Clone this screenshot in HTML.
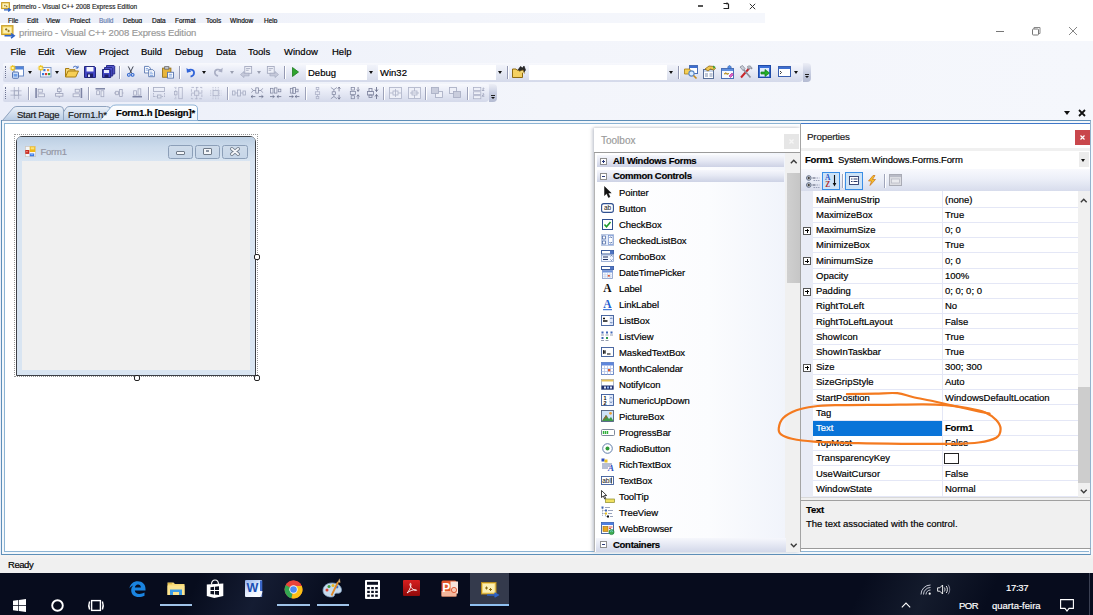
<!DOCTYPE html>
<html lang="en">
<head>
<meta charset="utf-8">
<title>primeiro - Visual C++ 2008 Express Edition</title>
<style>
html,body{margin:0;padding:0;}
body{width:1093px;height:615px;overflow:hidden;position:relative;background:#fff;font-family:"Liberation Sans",sans-serif;font-size:9.5px;color:#000;-webkit-text-stroke:0.18px currentColor;}
.abs{position:absolute;}
svg{position:absolute;overflow:visible;}
.t{position:absolute;white-space:nowrap;line-height:12px;}
#ghostmenu{left:0;top:13px;width:765px;height:10px;background:linear-gradient(90deg,#eceff9,#f3f5fb 60%,#f5f7fc);}
.gm{position:absolute;top:16.5px;font-size:6.5px;line-height:8px;color:#111;white-space:nowrap;}
#chrome{left:0;top:41px;width:1093px;height:514px;background:linear-gradient(90deg,#ebeef9 0%,#eff2fa 25%,#f3f5fb 50%,#f5f7fc 100%);}
.menu{position:absolute;top:46px;font-size:9.5px;line-height:12px;white-space:nowrap;color:#000;}
.tb{position:absolute;border-radius:2px 4px 4px 2px;background:linear-gradient(#f8f9fd 0%,#e9ecf7 40%,#d4d9ea 100%);}
.tbo{position:absolute;border-radius:0 4px 4px 0;background:linear-gradient(#eceef6 0%,#c9cfe2 50%,#b4bbd2 100%);}
.sep{position:absolute;width:1px;background:#9499b2;box-shadow:1px 0 0 #fff;}
.grip{position:absolute;width:1px;border-left:1px dotted #6d7391;}
.combo{position:absolute;background:#fff;height:15px;font-size:9.5px;line-height:15px;text-indent:2px;}
.cbtn{position:absolute;height:15px;width:9px;background:linear-gradient(#f1f3fa,#d9deec);}
.arr{position:absolute;width:0;height:0;border-left:2.5px solid transparent;border-right:2.5px solid transparent;border-top:3px solid #111;}
.arrg{position:absolute;width:0;height:0;border-left:2.5px solid transparent;border-right:2.5px solid transparent;border-top:3px solid #9a9fb0;}
.tab{position:absolute;font-size:9.5px;line-height:12px;white-space:nowrap;}
.tbx{position:absolute;left:619px;font-size:9.5px;line-height:12px;white-space:nowrap;color:#000;letter-spacing:-0.08px;}
.tbh{position:absolute;left:597px;width:187px;height:13px;background:linear-gradient(#f6f7fc 0%,#e6e9f4 45%,#cdd2e5 100%);}
.tbh b{position:absolute;left:16px;top:0;font-size:9.5px;line-height:13px;letter-spacing:-0.28px;}
.pm{position:absolute;width:7px;height:7px;border:1px solid #8e8e8e;background:#fff;box-sizing:border-box;}
.pr{position:absolute;left:813px;width:265px;height:1px;background:#e4e7f6;}
.pn{position:absolute;left:816px;font-size:9.5px;line-height:12px;white-space:nowrap;}
.pv{position:absolute;left:945px;font-size:9.5px;line-height:12px;white-space:nowrap;}
.px{position:absolute;left:803px;width:8px;height:8px;border:1px solid #555;background:#fff;box-sizing:border-box;}
.px:before{content:"";position:absolute;left:1px;top:2.5px;width:4px;height:1px;background:#000;}
.px:after{content:"";position:absolute;left:2.5px;top:1px;width:1px;height:4px;background:#000;}
.tk{position:absolute;color:#fff;font-size:9.5px;line-height:12px;white-space:nowrap;}
.ul{position:absolute;height:1.5px;background:#9fc3e8;top:604px;}
</style>
</head>
<body>
<div class="abs" id="ghostmenu"></div>
<div class="abs" id="chrome"></div>

<!-- ghost mini title bar -->
<svg class="abs" style="left:1px;top:1.500px" width="10" height="10" viewBox="0 0 10 10"><rect x="0.600" y="0.600" width="7.800" height="6" fill="#f6dc7a" stroke="#c69a22" stroke-width="1"/><rect x="1.800" y="1.800" width="5.400" height="3.600" fill="#fdf3c0"/><path d="M3 3.600h1.600M3.800 2.800v1.600M4.800 4.400h1.600M5.600 3.600v1.600" stroke="#8a6a10" stroke-width="0.600"/><path d="M3 7.800h6M7.200 6.200l2.200 1.600-2.200 1.600" stroke="#2b5fc0" stroke-width="1.200" fill="none"/></svg>
<div class="t" id="gtitle" style="left:13px;top:3px;font-size:6.5px;line-height:8px;color:#2a2a2a;">primeiro - Visual C++ 2008 Express Edition</div>
<div class="abs" style="left:698px;top:5px;width:5px;height:1.5px;background:#555"></div>
<svg class="abs" style="left:722px;top:2px" width="9" height="8" viewBox="0 0 9 8"><path d="M1.5 1.5h5M5 0.5v2M6.5 2v4.5h-5" stroke="#222" stroke-width="1.2" fill="none"/></svg>
<svg class="abs" style="left:749px;top:3px" width="7" height="7" viewBox="0 0 7 7"><path d="M0.8 0.8l5.4 5.4M6.2 0.8l-5.4 5.4" stroke="#333" stroke-width="1" fill="none"/></svg>
<div class="gm" style="left:8px">File</div>
<div class="gm" style="left:27px">Edit</div>
<div class="gm" style="left:46px">View</div>
<div class="gm" style="left:70px">Project</div>
<div class="gm" style="left:99px;color:#6a7fb0">Build</div>
<div class="gm" style="left:123px">Debug</div>
<div class="gm" style="left:152px">Data</div>
<div class="gm" style="left:175px">Format</div>
<div class="gm" style="left:206px">Tools</div>
<div class="gm" style="left:230px">Window</div>
<div class="gm" style="left:264px">Help</div>

<!-- main title bar -->
<div class="abs" style="left:0;top:23px;width:1093px;height:18px;background:#fff"></div>
<svg class="abs" style="left:1px;top:25px" width="14" height="14" viewBox="0 0 14 14"><rect x="0.700" y="0.700" width="11.200" height="8.800" fill="#f5d864" stroke="#c9a02a" stroke-width="1.200"/><rect x="2.300" y="2.300" width="8" height="5.600" fill="#fdf2b8"/><path d="M4 4.400h2.400M5.200 3.200v2.400M6.400 6h2.400M7.600 4.800v2.400" stroke="#8a6a10" stroke-width="0.900"/><path d="M3.500 10.800h9M10 8.500l3.200 2.300-3.200 2.300" stroke="#2f63c6" stroke-width="1.500" fill="none"/></svg>
<div class="t" id="mtitle" style="left:19px;top:27px;font-size:9.5px;letter-spacing:-0.1px;line-height:12px;color:#999;">primeiro - Visual C++ 2008 Express Edition</div>
<div class="abs" style="left:996px;top:31px;width:8px;height:1px;background:#777"></div>
<svg class="abs" style="left:1031px;top:26px" width="10" height="10" viewBox="0 0 10 10"><path d="M3 3V1.5h6v6H7.5" stroke="#888" stroke-width="1" fill="none"/><rect x="1.5" y="3" width="6" height="6" rx="0.8" fill="#fff" stroke="#777" stroke-width="1"/></svg>
<svg class="abs" style="left:1068px;top:26px" width="10" height="10" viewBox="0 0 10 10"><path d="M1 1l8 8M9 1l-8 8" stroke="#777" stroke-width="0.9" fill="none"/></svg>

<!-- menu bar -->
<div class="menu" style="left:10.5px">File</div>
<div class="menu" style="left:38px">Edit</div>
<div class="menu" style="left:66px">View</div>
<div class="menu" style="left:99px">Project</div>
<div class="menu" style="left:141px">Build</div>
<div class="menu" style="left:175px">Debug</div>
<div class="menu" style="left:216px">Data</div>
<div class="menu" style="left:248px">Tools</div>
<div class="menu" style="left:284px">Window</div>
<div class="menu" style="left:332px">Help</div>

<!-- ===== toolbar 1 ===== -->
<div class="tb" style="left:3px;top:62.5px;width:800px;height:19px"></div>
<div class="tbo" style="left:803px;top:62.5px;width:8px;height:19px"></div>
<div class="grip" style="left:5px;top:66px;height:12px"></div>
<!-- new project -->
<svg style="left:10px;top:65px" width="14" height="14" viewBox="0 0 14 14"><rect x="4" y="1.500" width="9.500" height="9.500" fill="#fdfdff" stroke="#5a7fc0" stroke-width="0.900"/><rect x="4.400" y="1.900" width="8.700" height="2.600" fill="#4f84dc"/><rect x="2.500" y="7" width="6" height="6.300" rx="0.800" fill="#c9dcf8" stroke="#4a6aa8" stroke-width="0.900"/><rect x="3.700" y="9" width="3.600" height="2.600" fill="#6f9fe8"/><path d="M2.800 0v6M-0.200 3h6M0.700 0.900l4.200 4.200M4.900 0.900L0.700 5.100" stroke="#f0c41c" stroke-width="1.200"/><rect x="1.800" y="2" width="2" height="2" fill="#fff3a8"/></svg>
<div class="arr" style="left:28px;top:71px"></div>
<!-- add item -->
<svg style="left:38px;top:65px" width="14" height="13" viewBox="0 0 14 13"><rect x="2.500" y="2.500" width="10.500" height="9.500" fill="#f4f7ff" stroke="#7a94c4" stroke-width="0.900"/><rect x="5.300" y="4" width="2.200" height="2.200" fill="#3b78d8"/><rect x="9" y="4" width="2.200" height="2.200" fill="#f09a2a"/><rect x="4" y="8" width="2.200" height="2.200" fill="#3b78d8"/><rect x="7" y="8" width="2.200" height="2.200" fill="#d8402f"/><rect x="10" y="8" width="2.200" height="2.200" fill="#35a03a"/><path d="M2.800 0v6M-0.200 3h6M0.700 0.900l4.200 4.200M4.900 0.900L0.700 5.100" stroke="#f0c41c" stroke-width="1.200"/><rect x="1.800" y="2" width="2" height="2" fill="#fff3a8"/></svg>
<div class="arr" style="left:55px;top:71px"></div>
<!-- open -->
<svg style="left:65px;top:65px" width="14" height="13" viewBox="0 0 14 13"><path d="M0.5 12V3.5h3.5l1 1.2h5V6" fill="#f4d677" stroke="#a87d12"/><path d="M0.5 12l2.5-6h10.5l-2.8 6z" fill="#f7cf55" stroke="#a87d12"/><path d="M8 2.5c1.5-1.8 3.6-1.6 4.6 0.2M13 0.8v2.2h-2.2" fill="none" stroke="#3a66c0" stroke-width="1"/></svg>
<!-- save -->
<svg style="left:84px;top:66px" width="12" height="12" viewBox="0 0 12 12"><path d="M0.5 0.5h10l1 1v10h-11z" fill="#4145c4" stroke="#23267e"/><rect x="2.5" y="1" width="7" height="4.5" fill="#f3f5ff"/><rect x="3" y="7.5" width="6" height="4" fill="#1d1f66"/><rect x="4" y="8.5" width="2" height="2.5" fill="#d8dcf5"/></svg>
<!-- save all -->
<svg style="left:102px;top:65px" width="13" height="13" viewBox="0 0 13 13"><path d="M4.5 0.5h7.5l0.7 0.7v7.8h-8.2z" fill="#5458cc" stroke="#2a2d8a"/><path d="M2.5 2.5h7.5l0.7 0.7v7.8h-8.2z" fill="#4a4ec8" stroke="#2a2d8a"/><path d="M0.5 4.5h7.5l0.7 0.7v7.3h-8.2z" fill="#4145c4" stroke="#23267e"/><rect x="2" y="5" width="5" height="3" fill="#e8ebff"/><rect x="2.5" y="9.5" width="4" height="3" fill="#1d1f66"/></svg>
<div class="sep" style="left:119px;top:66px;height:13px"></div>
<!-- cut -->
<svg style="left:127px;top:66px" width="7.500" height="11.500" viewBox="0 0 9 14"><path d="M1.5 0.5l4.2 8.5M7.5 0.5L3.3 9" stroke="#3d4350" stroke-width="1.2" fill="none"/><circle cx="2.2" cy="10.8" r="1.7" fill="none" stroke="#2f66cf" stroke-width="1.3"/><circle cx="6.8" cy="10.8" r="1.7" fill="none" stroke="#2f66cf" stroke-width="1.3"/></svg>
<!-- copy -->
<svg style="left:143.500px;top:66px" width="11" height="11.500" viewBox="0 0 13 14"><path d="M0.5 0.5h5l2 2v6h-7z" fill="#fff" stroke="#4a6aa8"/><path d="M2 3h3M2 5h4" stroke="#6f97dc"/><path d="M5.5 4.5h5l2 2v6.5h-7z" fill="#fff" stroke="#4a6aa8"/><path d="M7 7.5h3M7 9.5h4M7 11.5h4" stroke="#6f97dc"/></svg>
<!-- paste -->
<svg style="left:162px;top:65.500px" width="12" height="12.500" viewBox="0 0 14 15"><rect x="0.5" y="2.5" width="10" height="11" fill="#e8b53a" stroke="#8f6a12"/><rect x="3" y="0.8" width="5" height="3" fill="#c9ccd6" stroke="#666"/><rect x="6.5" y="7.5" width="7" height="7" fill="#fff" stroke="#4a6aa8"/><path d="M8 10h4M8 12h4" stroke="#6f97dc"/></svg>
<div class="sep" style="left:179px;top:66px;height:13px"></div>
<!-- undo -->
<svg style="left:186px;top:66.500px" width="10" height="10.500" viewBox="0 0 11 12"><path d="M2 4.2c3-2 7-1.2 7 2.5 0 2.3-1.6 3.8-4 4.3" fill="none" stroke="#2f63d8" stroke-width="2"/><path d="M0.3 1l0.6 5.6 5-1.6z" fill="#2f63d8"/></svg>
<div class="arr" style="left:202px;top:71px"></div>
<!-- redo (disabled) -->
<svg style="left:213px;top:67px" width="10" height="10" viewBox="0 0 11 11"><path d="M9 3.8c-3-2-7-1.2-7 2.3 0 2 1.4 3.3 3.6 3.8" fill="none" stroke="#a9aec4" stroke-width="1.8"/><path d="M10.7 0.8l-0.6 5.2-4.6-1.4z" fill="#a9aec4"/></svg>
<div class="arrg" style="left:230px;top:71px"></div>
<!-- navigate back (disabled) -->
<svg style="left:239.500px;top:66px" width="13" height="12" viewBox="0 0 15 14"><rect x="5.5" y="0.5" width="8" height="8" fill="#eef0f8" stroke="#a3a8be"/><path d="M7 3h5M7 5h3" stroke="#a3a8be"/><path d="M0.5 10l4-3.5v2h6v3h-6v2z" fill="#c5c9da" stroke="#a3a8be" stroke-width="0.8"/></svg>
<div class="arrg" style="left:257px;top:71px"></div>
<!-- navigate fwd (disabled) -->
<svg style="left:266px;top:66px" width="13" height="12" viewBox="0 0 15 14"><rect x="1.5" y="0.5" width="8" height="8" fill="#eef0f8" stroke="#a3a8be"/><path d="M3 3h5M3 5h3" stroke="#a3a8be"/><path d="M14.5 10l-4-3.5v2h-6v3h6v2z" fill="#c5c9da" stroke="#a3a8be" stroke-width="0.8"/></svg>
<div class="sep" style="left:284px;top:66px;height:13px"></div>
<!-- play -->
<svg style="left:292px;top:67px" width="7" height="10" viewBox="0 0 7 10"><path d="M0.5 0.5l6 4.5-6 4.5z" fill="#2fa52f" stroke="#1c7a1c" stroke-width="0.8"/></svg>
<div class="combo" style="left:306px;top:64.5px;width:61px">Debug</div>
<div class="cbtn" style="left:367px;top:64.5px"></div><div class="arr" style="left:369px;top:71px"></div>
<div class="combo" style="left:378px;top:64.5px;width:118px">Win32</div>
<div class="cbtn" style="left:496px;top:64.5px"></div><div class="arr" style="left:498px;top:71px"></div>
<div class="sep" style="left:507px;top:66px;height:13px"></div>
<!-- find in files -->
<svg style="left:512px;top:65px" width="14" height="14" viewBox="0 0 14 14"><path d="M0.5 12.5V4h3.5l1 1.2h5.5v7.3z" fill="#f4d061" stroke="#8f6a12"/><path d="M6 5l2.5-3.5 2 1.5 1.5-2 1.5 4-2 3" fill="#2a2a2a" stroke="#111" stroke-width="0.6"/><path d="M7 6.5l4-1.5 1.5 3.5" fill="#f7e08a" stroke="#8f6a12" stroke-width="0.7"/></svg>
<div class="combo" style="left:529px;top:64.5px;width:138px"></div>
<div class="cbtn" style="left:667px;top:64.5px"></div><div class="arr" style="left:669px;top:71px"></div>
<div class="sep" style="left:678px;top:66px;height:13px"></div>
<!-- solution explorer / search -->
<svg style="left:684px;top:65px" width="14" height="14" viewBox="0 0 14 14"><rect x="5.5" y="0.5" width="8" height="8" fill="#fff" stroke="#4a6fb5"/><rect x="6" y="1" width="7" height="2" fill="#3f6fd0"/><path d="M0.5 4h5l2 2.5-2 2.5h-5z" fill="#f4cf58" stroke="#a87d12" stroke-width="0.8"/><circle cx="7.5" cy="8.5" r="2.6" fill="#d9ecff" stroke="#5b87c7" stroke-width="1.1"/><path d="M9.5 10.5l3 3" stroke="#c58a1a" stroke-width="1.6"/></svg>
<!-- properties window -->
<svg style="left:702px;top:65px" width="14" height="14" viewBox="0 0 14 14"><rect x="1.500" y="4.500" width="10" height="9" fill="#fff" stroke="#5a6f98"/><rect x="2" y="5" width="9" height="2" fill="#c9d6ee"/><path d="M3 9h3M3 11h3M7.5 9h3M7.500 11h3" stroke="#7f8fb0"/><path d="M3 4l4-3 5 0.5 1.500 2-2 1.500-3-1-2.500 2z" fill="#f0c750" stroke="#8f6a12" stroke-width="0.8"/><path d="M11 0.500l2.500 1.500-2 2z" fill="#2f9b3a"/></svg>
<!-- object browser -->
<svg style="left:721px;top:65px" width="14" height="14" viewBox="0 0 14 14"><rect x="0.5" y="3.5" width="12" height="10" fill="#f7f9ff" stroke="#4a6fb5"/><rect x="1" y="4" width="11" height="2" fill="#5f8fe0"/><path d="M3 9l2-1.500 1 2 2-1z" fill="#e8b820" stroke="#a87d12" stroke-width="0.6"/><path d="M8 11l3-3 1.500 1.500-3 3z" fill="#e060c8" stroke="#9a2a8a" stroke-width="0.6"/><path d="M8.500 0.500l2 1.500-2 2-2-2z" fill="#4f8fe8" stroke="#2a55a8" stroke-width="0.6"/></svg>
<!-- toolbox (tools) -->
<svg style="left:739px;top:65px" width="14" height="14" viewBox="0 0 14 14"><path d="M2 12.500l8-9" stroke="#c8252b" stroke-width="2"/><path d="M8.500 1.500c2-1.500 4.500 0 4.500 2.500l-2-1-1.500 1.500z" fill="#b9bec9" stroke="#6a6f7c" stroke-width="0.6"/><path d="M11.500 12.500l-7-8" stroke="#8a8f9c" stroke-width="1.6"/><path d="M1 2l2.500-1.500 2.500 3-2 2z" fill="#c9cdd8" stroke="#6a6f7c" stroke-width="0.6"/></svg>
<!-- start page -->
<svg style="left:758px;top:65px" width="14" height="14" viewBox="0 0 14 14"><rect x="0.500" y="0.500" width="12" height="12" fill="#3a6fd8" stroke="#1f4aa8"/><rect x="2" y="3" width="9" height="8.500" fill="#dfeaff"/><path d="M3 7h4v-2.500l4.500 3.500-4.500 3.500v-2.500h-4z" fill="#22b02a" stroke="#0f7a16" stroke-width="0.7"/></svg>
<!-- command window -->
<svg style="left:778px;top:66px" width="13" height="12" viewBox="0 0 13 12"><rect x="0.500" y="0.500" width="12" height="10" fill="#fff" stroke="#3a5fb0"/><rect x="1" y="1" width="11" height="2" fill="#3f6fd0"/><path d="M2 5l1.500 1.500-1.500 1.500" fill="none" stroke="#222" stroke-width="0.9"/></svg>
<div class="arr" style="left:794px;top:71px"></div>
<div class="abs" style="left:805px;top:74px;width:4px;height:1px;background:#222"></div>
<div class="arr" style="left:805px;top:76px;border-left-width:2px;border-right-width:2px;border-top-width:2.5px"></div>

<!-- ===== toolbar 2 (layout, disabled) ===== -->
<div class="tb" style="left:3px;top:84px;width:486px;height:18px"></div>
<div class="tbo" style="left:489px;top:84px;width:8px;height:18px"></div>
<div class="grip" style="left:5px;top:87px;height:12px"></div>
<svg style="left:10px;top:86.500px" width="12" height="12" viewBox="0 0 13 14" fill="none" stroke="#a9aec4" stroke-width="0.9"><path d="M0 4.500h13M0 9.500h13M4.500 0v14M9.500 0v14"/><rect x="4.500" y="4.500" width="5" height="5" stroke="#9aa0b8" fill="#e4e7f2"/></svg>
<div class="sep" style="left:28px;top:87px;height:13px;background:#9da2b9"></div>
<svg style="left:34.500px;top:87.500px" width="10.500" height="10" viewBox="0 0 12 12" fill="none" stroke="#a0a5bd" stroke-width="0.95"><path d="M1 0v12" stroke-width="1.900" stroke="#7d84a4"/><rect x="3.500" y="1.500" width="5" height="3.500" fill="#e9ecf5"/><rect x="3.500" y="7" width="7.500" height="3.500" fill="#e9ecf5"/></svg>
<svg style="left:54.500px;top:87px" width="8.500" height="11" viewBox="0 0 9 12" fill="none" stroke="#a0a5bd" stroke-width="0.95"><path d="M4.500 0v12"/><rect x="2.500" y="2" width="4" height="3" fill="#e9ecf5"/><rect x="0.500" y="7" width="8" height="3" fill="#e9ecf5"/></svg>
<svg style="left:72px;top:87.500px" width="10.500" height="10" viewBox="0 0 12 12" fill="none" stroke="#a0a5bd" stroke-width="0.95"><path d="M11 0v12" stroke-width="1.900" stroke="#7d84a4"/><rect x="3.500" y="1.500" width="5" height="3.500" fill="#e9ecf5"/><rect x="1" y="7" width="7.500" height="3.500" fill="#e9ecf5"/></svg>
<div class="sep" style="left:88px;top:87px;height:13px;background:#9da2b9"></div>
<svg style="left:95px;top:87.500px" width="10.500" height="9.500" viewBox="0 0 12 12" fill="none" stroke="#a0a5bd" stroke-width="0.95"><path d="M0 1h12" stroke-width="1.900" stroke="#7d84a4"/><rect x="1.500" y="3.500" width="3.500" height="5" fill="#e9ecf5"/><rect x="7" y="3.500" width="3.500" height="7.500" fill="#e9ecf5"/></svg>
<svg style="left:113.500px;top:89px" width="9.500" height="8" viewBox="0 0 11 9" fill="none" stroke="#a0a5bd" stroke-width="0.95"><path d="M0 4.500h11"/><rect x="2" y="2.500" width="3" height="4" fill="#e9ecf5"/><rect x="6.500" y="0.500" width="3" height="8" fill="#e9ecf5"/></svg>
<svg style="left:131.500px;top:88px" width="10.500" height="9.500" viewBox="0 0 12 12" fill="none" stroke="#a0a5bd" stroke-width="0.95"><path d="M0 11h12" stroke-width="1.900" stroke="#7d84a4"/><rect x="1.500" y="3.500" width="3.500" height="5.500" fill="#e9ecf5"/><rect x="7" y="1" width="3.500" height="8" fill="#e9ecf5"/></svg>
<div class="sep" style="left:148px;top:87px;height:13px;background:#9da2b9"></div>
<svg style="left:153px;top:87px" width="13" height="12" viewBox="0 0 13 12" fill="none" stroke="#a9aec4" stroke-width="0.85"><rect x="0.500" y="0.500" width="11" height="4"/><path d="M0.500 6v5M11.500 6v5M1 9.500h10" stroke-dasharray="1.500 1"/><rect x="4.500" y="8" width="3.500" height="3" fill="#dfe3ef"/></svg>
<svg style="left:173.7px;top:86.9px" width="8.7" height="12.2" viewBox="0 0 10 14" fill="none" stroke="#a9aec4" stroke-width="0.85"><rect x="5.500" y="0.500" width="4" height="13"/><path d="M0.500 0.500h3M0.500 13.500h3M2 1v12" stroke-dasharray="1.500 1"/><rect x="0.500" y="5" width="3" height="4" fill="#dfe3ef"/></svg>
<svg style="left:190.8px;top:86.9px" width="11.3" height="12.2" viewBox="0 0 13 14" fill="none" stroke="#a9aec4" stroke-width="0.85"><rect x="0.500" y="0.500" width="12" height="13" stroke-dasharray="3 2"/><rect x="4" y="4.500" width="5" height="5" fill="#dfe3ef"/><path d="M6.500 0v4.500M6.500 9.500v4.500M0 7h4M9 7h4"/></svg>
<svg style="left:209.8px;top:86.9px" width="11.3" height="12.2" viewBox="0 0 13 14" fill="none" stroke="#a9aec4" stroke-width="0.85"><rect x="3.500" y="4" width="6" height="6" fill="#dfe3ef"/><path d="M3.500 0v3M6.500 0v3M9.500 0v3M3.500 11v3M6.500 11v3M9.500 11v3M0 4.500h2.500M0 7h2.500M0 9.500h2.500M10.500 4.500h2.500M10.500 7h2.500M10.500 9.500h2.500" stroke-dasharray="1 1"/></svg>
<div class="sep" style="left:227px;top:87px;height:13px;background:#9da2b9"></div>
<svg style="left:232px;top:89px" width="14" height="8" viewBox="0 0 14 8" fill="none" stroke="#a9aec4" stroke-width="0.85"><rect x="0.500" y="2" width="2.500" height="4"/><rect x="5.500" y="1" width="3" height="6"/><rect x="11" y="2" width="2.500" height="4"/><path d="M3 4h2.500M8.500 4h2.500"/></svg>
<svg style="left:250.9px;top:86.9px" width="12.2" height="12.2" viewBox="0 0 14 14" fill="none" stroke="#7f859f" stroke-width="0.85"><rect x="5.500" y="1" width="3" height="6"/><path d="M0.500 1.500l2 2.500-2 2.500M13.500 1.500l-2 2.500 2 2.500M2.500 4h3M8.500 4h3"/><path d="M0 11h5M2 9.500l-2 1.500 2 1.500M14 11h-5M12 9.500l2 1.500-2 1.500" stroke="#656b86"/></svg>
<svg style="left:269.8px;top:86.9px" width="11.3" height="12.2" viewBox="0 0 13 14" fill="none" stroke="#7f859f" stroke-width="0.85"><rect x="0.500" y="1.500" width="3" height="5.500"/><rect x="5" y="1" width="3" height="6"/><rect x="9.500" y="2.500" width="3" height="3"/><path d="M0 11h5M3 9.500l2 1.500-2 1.500M13 11h-5M10 9.500l-2 1.500 2 1.500" stroke="#656b86"/></svg>
<svg style="left:288.8px;top:86.9px" width="10.4" height="12.2" viewBox="0 0 12 14" fill="none" stroke="#7f859f" stroke-width="0.85"><rect x="1.500" y="1.500" width="3" height="5.500"/><rect x="4.500" y="0.500" width="3" height="7"/><rect x="7.500" y="2.500" width="3" height="3"/><path d="M0 11h5M3 9.500l2 1.500-2 1.500M12 11h-5M9 9.500l-2 1.500 2 1.500" stroke="#656b86"/></svg>
<div class="sep" style="left:305px;top:87px;height:13px;background:#9da2b9"></div>
<svg style="left:313.5px;top:86.9px" width="7.0" height="12.2" viewBox="0 0 8 14" fill="none" stroke="#a9aec4" stroke-width="0.85"><rect x="2.500" y="0.500" width="3" height="2.500"/><rect x="1.500" y="5.500" width="5" height="3"/><rect x="2.500" y="11" width="3" height="2.500"/><path d="M4 3v2.500M4 8.500v2.500"/></svg>
<svg style="left:329.8px;top:86.9px" width="10.4" height="12.2" viewBox="0 0 12 14" fill="none" stroke="#7f859f" stroke-width="0.85"><rect x="2.500" y="5.500" width="4" height="3"/><path d="M1 0.500l3.500 2.500 3.500-2.500M1 13.500l3.500-2.500 3.500 2.500M4.500 3v2.500M4.500 8.500v2.500"/><path d="M10.500 0v5M9 2l1.500-2 1.500 2M10.500 14v-5M9 12l1.500 2 1.500-2" stroke="#656b86"/></svg>
<svg style="left:348.8px;top:86.9px" width="10.4" height="12.2" viewBox="0 0 12 14" fill="none" stroke="#7f859f" stroke-width="0.85"><rect x="2.500" y="0.500" width="4" height="3"/><rect x="1.500" y="5" width="6" height="3.500"/><rect x="2.500" y="10" width="4" height="3.500"/><path d="M10.500 0v5M9 3l1.500 2 1.500-2M10.500 14v-5M9 11l1.500-2 1.500 2" stroke="#656b86"/></svg>
<svg style="left:366px;top:87px" width="12" height="12" viewBox="0 0 12 12" fill="none" stroke="#7f859f" stroke-width="0.85"><rect x="3" y="1.500" width="3" height="3"/><rect x="1.500" y="4.500" width="6" height="3.500"/><rect x="3" y="8" width="3" height="2.500"/><path d="M10.500 0v4.500M9 2.500l1.500 2 1.500-2M10.500 12v-4.500M9 9.500l1.500-2 1.500 2" stroke="#656b86"/></svg>
<div class="sep" style="left:383px;top:87px;height:13px;background:#9da2b9"></div>
<svg style="left:389px;top:87px" width="13" height="12" viewBox="0 0 13 12" fill="none" stroke="#b0b5c9" stroke-width="0.85"><rect x="0.500" y="0.500" width="12" height="11" fill="#eef0f8"/><rect x="4" y="4" width="5" height="4"/><path d="M1 6h3M9 6h3M6.500 2v8"/></svg>
<svg style="left:408px;top:87px" width="13" height="12" viewBox="0 0 13 12" fill="none" stroke="#b0b5c9" stroke-width="0.85"><rect x="0.500" y="0.500" width="12" height="11" fill="#eef0f8"/><rect x="4" y="4" width="5" height="4"/><path d="M6.500 1v3M6.500 8v3M2 6h9"/></svg>
<div class="sep" style="left:425px;top:87px;height:13px;background:#9da2b9"></div>
<svg style="left:431px;top:87px" width="13" height="12" viewBox="0 0 13 12" fill="none" stroke="#a9aec4" stroke-width="0.85"><rect x="4.500" y="4.500" width="7" height="6" fill="#eef0f8"/><rect x="0.500" y="0.500" width="7" height="6" fill="#c9cddd"/></svg>
<svg style="left:449px;top:87px" width="13" height="12" viewBox="0 0 13 12" fill="none" stroke="#a9aec4" stroke-width="0.85"><rect x="0.500" y="0.500" width="7" height="6" fill="#eef0f8"/><rect x="4.500" y="4.500" width="7" height="6" fill="#c9cddd"/></svg>
<div class="sep" style="left:467px;top:87px;height:13px;background:#9da2b9"></div>
<svg style="left:472.9px;top:86.9px" width="12.2" height="12.2" viewBox="0 0 14 14" fill="none" stroke="#a9aec4" stroke-width="0.85"><rect x="0.500" y="0.500" width="8.500" height="3.500" fill="#eef0f8"/><rect x="0.500" y="5.500" width="8.500" height="3" fill="#eef0f8"/><rect x="0.500" y="10" width="8.500" height="3.500" fill="#eef0f8"/><path d="M11 1.500c1-1 2 0 1 1l-1.500 1.500h2.500M11 8c1-1 2 0 1 1l-1.500 1.500h2.500" stroke="#8e94ad" stroke-width="0.900"/></svg>
<div class="abs" style="left:491px;top:95px;width:4px;height:1px;background:#222"></div>
<div class="arr" style="left:491px;top:97px;border-left-width:2px;border-right-width:2px;border-top-width:2.500px"></div>


<!-- ===== document well ===== -->
<div class="abs" style="left:1px;top:120px;width:1090px;height:435px;box-sizing:border-box;border:1px solid #5e8fb8;border-right-color:#94b2cc;background:#f3f7fb"></div>
<div class="abs" style="left:4px;top:123px;width:1085px;height:429px;box-sizing:border-box;border:1px solid #8db4d4;border-right:none;background:#fff"></div>
<div class="abs" style="left:101px;top:120px;width:96px;height:3px;background:#f3f8fd"></div>
<!-- selection dotted frame -->
<div class="abs" style="left:14px;top:134px;width:244px;height:243px;box-sizing:border-box;border:1px dotted #9a9a9a"></div>
<!-- form window -->
<div class="abs" style="left:16px;top:136px;width:240px;height:240px;box-sizing:border-box;border:1.300px solid #3c3f45;border-radius:6px 6px 0 0;background:#d9e5f2"></div>
<div class="abs" style="left:17px;top:137px;width:238px;height:24px;border-radius:4px 4px 0 0;background:linear-gradient(#bccfe3 0%,#cbdaeb 40%,#d9e5f2 100%)"></div>
<div class="abs" style="left:22px;top:161px;width:228px;height:209px;background:#f0f0f0"></div>
<!-- form icon -->
<svg style="left:25px;top:146px" width="11" height="11" viewBox="0 0 11 11"><rect x="0.400" y="0.400" width="10.200" height="10.200" fill="#f4f6fa" stroke="#cfc8c0" stroke-width="0.800"/><rect x="4.700" y="0.400" width="5.600" height="5.600" fill="#f0b818"/><rect x="5.700" y="1.200" width="3.600" height="2.200" fill="#fbe27a"/><rect x="0.300" y="4" width="4" height="3.900" fill="#c8281e"/><rect x="1.300" y="5" width="1.300" height="1.300" fill="#f0a0a0"/><rect x="4.700" y="7.500" width="4.500" height="2.800" fill="#2f6fe0"/><rect x="5.500" y="8.300" width="2.800" height="0.900" fill="#9fc0f8"/></svg>
<div class="t" id="formcap" style="left:40.5px;top:146px;color:#9496a4;font-size:9.500px;letter-spacing:-0.250px">Form1</div>
<!-- caption buttons -->
<div class="abs" style="left:168px;top:144.5px;width:25px;height:14.5px;box-sizing:border-box;border:1px solid #8c9fb8;border-radius:2.5px;background:linear-gradient(#cfdcea,#c6d6e8)"></div>
<div class="abs" style="left:195px;top:144.5px;width:25px;height:14.5px;box-sizing:border-box;border:1px solid #8c9fb8;border-radius:2.5px;background:linear-gradient(#cfdcea,#c6d6e8)"></div>
<div class="abs" style="left:222px;top:144.5px;width:26px;height:14.5px;box-sizing:border-box;border:1px solid #8c9fb8;border-radius:2.5px;background:linear-gradient(#cfdcea,#c6d6e8)"></div>
<div class="abs" style="left:176px;top:150.5px;width:9px;height:4.5px;box-sizing:border-box;border:1px solid #6f7a88;border-radius:1px;background:#f4f6f9"></div>
<div class="abs" style="left:203px;top:148px;width:9px;height:7px;box-sizing:border-box;border:1px solid #6f7a88;border-radius:1px;background:#f4f6f9"></div>
<div class="abs" style="left:206px;top:150px;width:3px;height:2px;background:#8a94a2"></div>
<svg style="left:230px;top:147px" width="10" height="9" viewBox="0 0 10 9"><path d="M1.800 1.800l6.400 5.400M8.200 1.800l-6.400 5.400" stroke="#6f7a88" stroke-width="3.600" stroke-linecap="round"/><path d="M1.800 1.800l6.400 5.400M8.200 1.800l-6.400 5.400" stroke="#f4f6f9" stroke-width="1.900" stroke-linecap="round"/></svg>
<!-- sizing handles -->
<div class="abs" style="left:254px;top:254px;width:6px;height:6px;box-sizing:border-box;border:1px solid #222;border-radius:2px;background:#fff"></div>
<div class="abs" style="left:133.5px;top:374.5px;width:6px;height:6px;box-sizing:border-box;border:1px solid #222;border-radius:2px;background:#fff"></div>
<div class="abs" style="left:254px;top:374.5px;width:6px;height:6px;box-sizing:border-box;border:1px solid #222;border-radius:2px;background:#fff"></div>

<!-- ===== document tabs ===== -->
<svg style="left:0;top:104px" width="200" height="18" viewBox="0 0 200 18">
<defs>
<linearGradient id="tg1" x1="0" y1="0" x2="0" y2="1"><stop offset="0" stop-color="#ecf1f9"/><stop offset="1" stop-color="#b7cbe3"/></linearGradient>
<linearGradient id="tg2" x1="0" y1="0" x2="0" y2="1"><stop offset="0" stop-color="#ffffff"/><stop offset="1" stop-color="#eef5fc"/></linearGradient>
</defs>
<path d="M2.500 16.500L13.500 3.500Q15 2.500 17 2.500H60Q63.500 2.500 63.500 6V16.500z" fill="url(#tg1)" stroke="#8fa3bf"/>
<path d="M63.500 16.500V8L66.500 3.500Q67.500 2.500 70 2.500H106.500Q110 2.500 110.500 5V16.500z" fill="url(#tg1)" stroke="#8fa3bf"/>
<path d="M100 16.500L111.500 2.500Q113 1 116 1H193Q197.500 1 197.500 5V16.500z" fill="url(#tg2)" stroke="#8db2d6"/>
</svg>
<div class="tab" style="left:17px;top:109px;color:#1a1a1a;letter-spacing:-0.25px" id="tab1">Start Page</div>
<div class="tab" style="left:68px;top:109px;color:#1a1a1a" id="tab2">Form1.h*</div>
<div class="tab" style="left:116px;top:107px;font-weight:bold;letter-spacing:-0.17px" id="tab3">Form1.h [Design]*</div>
<div class="arr" style="left:1063.5px;top:111px;border-left-width:3.800px;border-right-width:3.800px;border-top-width:4px"></div>
<svg style="left:1078px;top:108.500px" width="8" height="8" viewBox="0 0 8 8"><path d="M1 1l6 6M7 1l-6 6" stroke="#111" stroke-width="1.800"/></svg>

<!-- ===== Toolbox panel ===== -->
<div class="abs" style="left:594px;top:128px;width:206px;height:424px;background:#fff;box-shadow:-2px 0 3px rgba(120,130,150,0.350),0 -1px 2px rgba(120,130,150,0.200)"></div>
<div class="t" id="tbxtitle" style="left:601px;top:135px;color:#9a9a9a;font-size:10px">Toolbox</div>
<div class="abs" style="left:784px;top:134px;width:15px;height:15px;background:#e6e6e6"></div>
<svg style="left:788px;top:138px" width="7" height="7" viewBox="0 0 7 7"><path d="M1.500 1.500l4 4M5.500 1.500l-4 4" stroke="#f6f6f6" stroke-width="1.300"/></svg>
<div class="abs" style="left:594px;top:152px;width:206px;height:1px;background:#9b9b9b"></div>
<div class="abs" style="left:594px;top:153px;width:1px;height:399px;background:#b4b4b4"></div>
<div class="abs" style="left:595px;top:153px;width:190px;height:399px;background:linear-gradient(90deg,#ffffff 0%,#fbfcfe 60%,#f1f4fb 100%)"></div>
<div class="abs" style="left:799.700px;top:124px;width:1.800px;height:428px;background:#a4a4a4"></div>
<div class="abs" style="left:785px;top:153px;width:15px;height:399px;background:#f0f0f0"></div>
<div class="abs" style="left:787px;top:173px;width:12.500px;height:110px;background:linear-gradient(90deg,#d0d0d0,#c6c6c6)"></div>
<svg style="left:789.500px;top:158.500px" width="7.500" height="5" viewBox="0 0 9 6"><path d="M1 5l3.500-3.500 3.500 3.500" fill="none" stroke="#3a3a3a" stroke-width="1.700"/></svg>
<svg style="left:789.500px;top:543px" width="7.500" height="5" viewBox="0 0 9 6"><path d="M1 1l3.500 3.500 3.500-3.500" fill="none" stroke="#3a3a3a" stroke-width="1.700"/></svg>
<div class="tbh" style="top:155px;height:12px"><b id="tbh1" style="line-height:12px">All Windows Forms</b></div>
<div class="pm" style="left:600px;top:158px"></div><div class="abs" style="left:602px;top:161px;width:3px;height:1px;background:#2a3a7a"></div><div class="abs" style="left:603px;top:160px;width:1px;height:3px;background:#2a3a7a"></div>
<div class="tbh" style="top:170px;height:12px"><b id="tbh2" style="line-height:12px">Common Controls</b></div>
<div class="pm" style="left:600px;top:173px"></div><div class="abs" style="left:602px;top:176px;width:3px;height:1px;background:#2a3a7a"></div>
<svg style="left:604px;top:186px" width="8" height="12" viewBox="0 0 8 12"><path d="M0.5 0.5v9l2.200-2 1.800 4 1.500-0.700-1.800-3.800h3z" fill="#111" stroke="#111" stroke-width="0.500"/></svg>
<div class="tbx" style="top:186.5px">Pointer</div>
<svg style="left:601px;top:203px" width="13" height="10" viewBox="0 0 13 10"><rect x="0.600" y="0.600" width="11.800" height="8.800" rx="2.200" fill="#fff" stroke="#2f4f8f" stroke-width="1.100"/><text x="6.500" y="7.300" font-size="6.500" text-anchor="middle" font-family="Liberation Sans, sans-serif" fill="#111">ab</text></svg>
<div class="tbx" style="top:202.5px">Button</div>
<svg style="left:602px;top:218.5px" width="11" height="11" viewBox="0 0 11 11"><rect x="0.500" y="0.500" width="10" height="10" fill="#fff" stroke="#2f4f8f"/><path d="M2.500 5.500l2 2.200 4-4.700" fill="none" stroke="#1f9a2a" stroke-width="1.600"/></svg>
<div class="tbx" style="top:218.5px">CheckBox</div>
<svg style="left:601px;top:234px" width="13" height="12" viewBox="0 0 13 12"><rect x="0.500" y="0.500" width="12" height="11" fill="#e4ecfa" stroke="#7f97c7" stroke-dasharray="1 1"/><rect x="1.500" y="2" width="3" height="3" fill="#fff" stroke="#3a5a9a" stroke-width="0.700"/><rect x="1.500" y="7" width="3" height="3" fill="#fff" stroke="#3a5a9a" stroke-width="0.700"/><rect x="7.500" y="1.500" width="4.500" height="9" fill="#fff" stroke="#6f8fcf" stroke-width="0.700"/><path d="M8.500 4l1.200-1.300 1.200 1.300M8.500 8l1.200 1.300 1.200-1.300" fill="none" stroke="#3a5a9a" stroke-width="0.800"/></svg>
<div class="tbx" style="top:234.5px">CheckedListBox</div>
<svg style="left:601px;top:250px" width="13" height="12" viewBox="0 0 13 12"><rect x="0.500" y="0.500" width="12" height="3.500" fill="#fff" stroke="#3a5a9a"/><rect x="9" y="0.500" width="3.500" height="3.500" fill="#4f74c2"/><rect x="0.500" y="5" width="12" height="6.500" fill="#f2f6ff" stroke="#7f97c7" stroke-width="0.700"/><path d="M2 7h5M2 9.500h5" stroke="#1f2f5f" stroke-width="1.200"/><path d="M9.500 6.500l1 -1 1 1M9.500 9.500l1 1 1-1" fill="none" stroke="#3a5a9a" stroke-width="0.700"/></svg>
<div class="tbx" style="top:250.5px">ComboBox</div>
<svg style="left:601px;top:265.5px" width="13" height="13" viewBox="0 0 13 13"><rect x="0.500" y="0.500" width="12" height="3" fill="#fff" stroke="#3a5a9a"/><rect x="9" y="0.500" width="3.500" height="3" fill="#4f74c2"/><rect x="1.500" y="4.500" width="10" height="8" fill="#fff" stroke="#7f97c7" stroke-width="0.800"/><rect x="1.500" y="4.500" width="10" height="2" fill="#6f93dc"/><path d="M4 7v5.500M6.500 7v5.500M9 7v5.500M1.500 8.800h10M1.500 10.800h10" stroke="#b7c6e6" stroke-width="0.600"/><rect x="6.800" y="9" width="2" height="1.600" fill="#e0552a"/></svg>
<div class="tbx" style="top:266.5px">DateTimePicker</div>
<svg style="left:601px;top:282px" width="13" height="12" viewBox="0 0 13 12"><text x="6.300" y="10.300" font-size="11.500" font-weight="bold" text-anchor="middle" font-family="Liberation Serif, serif" fill="#111">A</text></svg>
<div class="tbx" style="top:282.5px">Label</div>
<svg style="left:601px;top:297.5px" width="13" height="13" viewBox="0 0 13 13"><text x="6.300" y="10" font-size="11.500" font-weight="bold" text-anchor="middle" font-family="Liberation Serif, serif" fill="#1f5fd0">A</text><path d="M2 11.700h9" stroke="#1f5fd0" stroke-width="1"/></svg>
<div class="tbx" style="top:298.5px">LinkLabel</div>
<svg style="left:601px;top:314.5px" width="13" height="11" viewBox="0 0 13 11"><rect x="0.500" y="0.500" width="12" height="10" fill="#fff" stroke="#3a5a9a" stroke-width="0.900"/><rect x="8.500" y="1" width="3.500" height="9" fill="#dfe8fa"/><path d="M2 3.500h2M2 6h4.500" stroke="#111" stroke-width="1.300"/><path d="M9.300 4l1-1.200 1 1.200M9.300 7l1 1.200 1-1.200" fill="none" stroke="#3a5a9a" stroke-width="0.700"/></svg>
<div class="tbx" style="top:314.5px">ListBox</div>
<svg style="left:601px;top:330.5px" width="13" height="11" viewBox="0 0 13 11"><g fill="#3f66b8"><rect x="0.500" y="0.500" width="2" height="2"/><rect x="5" y="0.500" width="2" height="2"/><rect x="9.500" y="0.500" width="2" height="2"/><rect x="0.500" y="6" width="2" height="2"/></g><g fill="#2f9a4a"><rect x="5" y="6" width="2" height="2"/></g><path d="M0 4h3M4.500 4h3M9 4h3M0 9.500h3M4.500 9.500h3" stroke="#7a8499" stroke-width="0.800"/></svg>
<div class="tbx" style="top:330.5px">ListView</div>
<svg style="left:601px;top:347px" width="13" height="10" viewBox="0 0 13 10"><rect x="0.500" y="0.500" width="12" height="9" fill="#fff" stroke="#3a5a9a" stroke-width="0.900"/><path d="M2.500 3v4M4 3v4M2 4.300h2.600M2 5.700h2.600" stroke="#111" stroke-width="0.800"/><path d="M6 7h3.500" stroke="#111" stroke-width="1.100"/></svg>
<div class="tbx" style="top:346.5px">MaskedTextBox</div>
<svg style="left:601px;top:361.5px" width="13" height="13" viewBox="0 0 13 13"><rect x="0.500" y="0.500" width="12" height="12" fill="#fff" stroke="#5f7fc2" stroke-width="0.900"/><rect x="0.500" y="0.500" width="12" height="3" fill="#5f86dc"/><path d="M3.500 4v8.500M6.500 4v8.500M9.500 4v8.500M0.500 6.500h12M0.500 9.500h12" stroke="#aebfe6" stroke-width="0.700"/><rect x="7" y="7" width="2.300" height="2.300" fill="#e0552a"/></svg>
<div class="tbx" style="top:362.5px">MonthCalendar</div>
<svg style="left:601px;top:378.5px" width="13" height="11" viewBox="0 0 13 11"><rect x="0.500" y="0.500" width="12" height="10" fill="#fff" stroke="#8f9ab5" stroke-width="0.700"/><rect x="0.500" y="0.500" width="12" height="2" fill="#e8c25a"/><rect x="0.500" y="6.500" width="12" height="4" fill="#1f2f6f"/><rect x="3" y="7.500" width="2" height="2" fill="#dfe6f7"/><rect x="6" y="7.500" width="2" height="2" fill="#8fb0ef"/><rect x="9" y="7.500" width="2" height="2" fill="#dfe6f7"/></svg>
<div class="tbx" style="top:378.5px">NotifyIcon</div>
<svg style="left:601px;top:394px" width="13" height="12" viewBox="0 0 13 12"><rect x="0.500" y="0.500" width="12" height="11" fill="#fff" stroke="#3a5a9a" stroke-width="0.900"/><rect x="8" y="1" width="4" height="10" fill="#dfe8fa"/><text x="4" y="5.500" font-size="5.500" font-weight="bold" text-anchor="middle" font-family="Liberation Sans, sans-serif" fill="#111">1</text><text x="4" y="10.800" font-size="5.500" font-weight="bold" text-anchor="middle" font-family="Liberation Sans, sans-serif" fill="#111">2</text><path d="M9 4.500l1-1.300 1 1.300M9 7.500l1 1.300 1-1.300" fill="none" stroke="#3a5a9a" stroke-width="0.700"/></svg>
<div class="tbx" style="top:394.5px">NumericUpDown</div>
<svg style="left:601px;top:410px" width="13" height="12" viewBox="0 0 13 12"><rect x="0.500" y="0.500" width="12" height="11" fill="#cfe3fa" stroke="#4f5f7f" stroke-width="0.900"/><path d="M1 11l4-6 3 4 2-2 2.500 4z" fill="#3f9a4a"/><path d="M1 11l4-6 1.500 2z" fill="#8a6a3a"/><circle cx="9.500" cy="3.300" r="1.400" fill="#f0a030"/></svg>
<div class="tbx" style="top:410.5px">PictureBox</div>
<svg style="left:601px;top:428.5px" width="14" height="7" viewBox="0 0 14 7"><rect x="0.500" y="0.500" width="13" height="6" rx="1" fill="#fff" stroke="#6f7a8f" stroke-width="0.900"/><path d="M2.500 2v3M4.500 2v3M6.500 2v3" stroke="#2fb03a" stroke-width="1.400"/></svg>
<div class="tbx" style="top:426.5px">ProgressBar</div>
<svg style="left:602px;top:442.5px" width="11" height="11" viewBox="0 0 11 11"><circle cx="5.500" cy="5.500" r="4.800" fill="#fff" stroke="#4f6f9f" stroke-width="0.900"/><circle cx="5.500" cy="5.500" r="2" fill="#2f9a3a"/></svg>
<div class="tbx" style="top:442.5px">RadioButton</div>
<svg style="left:601px;top:457.5px" width="13" height="13" viewBox="0 0 13 13"><rect x="0.500" y="0.500" width="3" height="3" fill="#2f4fc0"/><rect x="3.500" y="1.500" width="3" height="3" fill="#e8c020"/><path d="M1 6h10M1 8h8M1 10h6" stroke="#5f6f9f" stroke-width="0.900"/><text x="10" y="12.800" font-size="9" font-style="italic" font-weight="bold" text-anchor="middle" font-family="Liberation Serif, serif" fill="#2f4fc0">A</text></svg>
<div class="tbx" style="top:458.5px">RichTextBox</div>
<svg style="left:601px;top:475.5px" width="13" height="9" viewBox="0 0 13 9"><rect x="0.500" y="0.500" width="12" height="8" fill="#fff" stroke="#3a5a9a" stroke-width="0.900"/><text x="5.500" y="6.800" font-size="6.500" text-anchor="middle" font-family="Liberation Sans, sans-serif" fill="#111">abl</text><path d="M10.500 1.500v6" stroke="#111" stroke-width="0.700"/></svg>
<div class="tbx" style="top:474.5px">TextBox</div>
<svg style="left:601px;top:489.5px" width="14" height="13" viewBox="0 0 14 13"><path d="M0.500 0.500v7l1.800-1.500 1.400 3 1.100-0.500-1.400-3h2.300z" fill="#fff" stroke="#111" stroke-width="0.800"/><rect x="4.500" y="9" width="9" height="3.500" fill="#f0e060" stroke="#8a8a2a" stroke-width="0.700"/></svg>
<div class="tbx" style="top:490.5px">ToolTip</div>
<svg style="left:601px;top:506px" width="13" height="12" viewBox="0 0 13 12"><path d="M1.500 2v8M1.500 4.500h3M1.500 7.500h3M4.500 7.500v3h2" stroke="#7a8499" stroke-width="0.700" stroke-dasharray="1 0.700" fill="none"/><rect x="0.500" y="0.500" width="2" height="2" fill="#3f66b8"/><rect x="4" y="3.500" width="2" height="2" fill="#3f66b8"/><rect x="4" y="6.500" width="2" height="2" fill="#e8c020"/><rect x="6" y="9.500" width="2" height="2" fill="#111"/><path d="M4 1.500h5M7 4.500h5M7 7.500h4M9 10.500h3" stroke="#8f9ab5" stroke-width="0.900"/></svg>
<div class="tbx" style="top:506.5px">TreeView</div>
<svg style="left:601px;top:521.5px" width="14" height="13" viewBox="0 0 14 13"><rect x="0.500" y="0.500" width="12" height="11" fill="#fff" stroke="#3a5a9a" stroke-width="0.900"/><rect x="0.500" y="0.500" width="12" height="2.500" fill="#4f7fe0"/><rect x="2" y="4.500" width="5" height="5" fill="#e8a820" stroke="#9a6a10" stroke-width="0.600"/><path d="M8 5h3.500M8 6.500h2" stroke="#d83a2a" stroke-width="0.900"/><circle cx="10.500" cy="10" r="2.600" fill="#3fae4f" stroke="#1f7a3f" stroke-width="0.600"/><path d="M9 9.500q1.500-1.500 3 0" stroke="#7fd0f0" stroke-width="0.800" fill="none"/></svg>
<div class="tbx" style="top:522.5px">WebBrowser</div>
<div class="tbh" style="top:538px;height:14px;left:596px;width:190px;background:linear-gradient(#f6f7fc 0%,#e6e9f4 45%,#d3d8e9 100%)"><b style="line-height:13px;left:17px">Containers</b></div>
<div class="pm" style="left:600px;top:541px"></div><div class="abs" style="left:602px;top:544px;width:3px;height:1px;background:#2a3a7a"></div>

<!-- ===== Properties panel ===== -->
<div class="abs" style="left:801px;top:123px;width:289px;height:426px;background:#fff;border-top:1px solid #3f78c9;box-sizing:border-box"></div>
<div class="t" id="ptitle" style="left:807px;top:130.5px;font-size:9.800px;color:#1e1e1e;letter-spacing:-0.200px">Properties</div>
<div class="abs" style="left:1075px;top:130px;width:15px;height:15px;background:#c9474c"></div>
<svg style="left:1079px;top:134px" width="7" height="7" viewBox="0 0 7 7"><path d="M1.500 1.500l4 4M5.500 1.500l-4 4" stroke="#fff" stroke-width="1.200"/></svg>
<div class="abs" style="left:801px;top:148px;width:289px;height:3px;background:#f0f0f0"></div>
<div class="t" id="pcombo1" style="left:805px;top:154px;font-weight:bold;letter-spacing:-0.2px">Form1</div>
<div class="t" id="pcombo2" style="left:838px;top:154px;letter-spacing:-0.1px">System.Windows.Forms.Form</div>
<div class="abs" style="left:1079px;top:152px;width:10px;height:15px;background:#ececec"></div><div class="arr" style="left:1081px;top:159px;border-left-width:2.800px;border-right-width:2.800px"></div>
<div class="abs" style="left:801px;top:169px;width:289px;height:22px;background:linear-gradient(#f8f9fd 0%,#eceff8 45%,#d7dcec 100%)"></div>
<svg style="left:805.5px;top:174.5px" width="14" height="13" viewBox="0 0 14 13"><circle cx="2.800" cy="3" r="2.300" fill="#fff" stroke="#3a4a6a" stroke-width="0.800"/><path d="M1.400 3h2.800M2.800 1.600v2.800" stroke="#111" stroke-width="0.900"/><circle cx="2.800" cy="10" r="2.300" fill="#fff" stroke="#3a4a6a" stroke-width="0.800"/><path d="M1.400 10h2.800M2.800 8.600v2.800" stroke="#111" stroke-width="0.900"/><path d="M6.500 3h3" stroke="#555b70" stroke-width="1"/><path d="M7.500 5.500h6" stroke="#9aa0b8" stroke-width="1" stroke-dasharray="1.500 0.800"/><path d="M6.500 10h3" stroke="#555b70" stroke-width="1"/><path d="M7.500 12.500h6M10.500 3h3M10.500 10h3" stroke="#9aa0b8" stroke-width="1" stroke-dasharray="1.500 0.800"/></svg>
<div class="abs" style="left:822px;top:172px;width:18px;height:18px;box-sizing:border-box;border:1px solid #3a8ee6;background:#cde3f7"></div>
<svg style="left:824px;top:174px" width="14" height="14" viewBox="0 0 14 14"><text x="3.800" y="6.200" font-size="7.500" font-weight="bold" text-anchor="middle" font-family="Liberation Serif, serif" fill="#2a55c8">A</text><text x="3.800" y="13" font-size="7.500" font-weight="bold" text-anchor="middle" font-family="Liberation Serif, serif" fill="#b03030">Z</text><path d="M10.500 1v10" stroke="#111" stroke-width="1.100"/><path d="M8.700 9l1.800 3.500 1.800-3.500z" fill="#111"/></svg>
<div class="sep" style="left:842px;top:174px;height:14px;background:#a0a5bb"></div>
<div class="abs" style="left:845px;top:172px;width:18px;height:18px;box-sizing:border-box;border:1px solid #3a8ee6;background:#cde3f7"></div>
<svg style="left:849px;top:176px" width="10" height="9" viewBox="0 0 10 9"><rect x="0.500" y="0.500" width="9" height="8" fill="#fff" stroke="#2a3a6a" stroke-width="0.900"/><path d="M2 3h1.500M4.500 3h4M2 5.500h1.500M4.500 5.500h4" stroke="#2a3a6a" stroke-width="1"/></svg>
<svg style="left:867px;top:175px" width="10" height="11" viewBox="0 0 10 11"><path d="M6 0.500L1.500 6h3L3 10.500 8.500 4.500h-3L8 0.500z" fill="#f6c02a" stroke="#c8701a" stroke-width="0.700"/></svg>
<div class="sep" style="left:884px;top:174px;height:14px;background:#a0a5bb"></div>
<svg style="left:889px;top:174px" width="13" height="13" viewBox="0 0 13 13"><rect x="0.500" y="0.500" width="12" height="11" fill="#dcdde2" stroke="#a9abb5"/><rect x="1" y="1" width="11" height="2" fill="#b9bbc6"/><rect x="2.500" y="5" width="8" height="4" fill="#e9eaee" stroke="#b4b6c0" stroke-width="0.700"/></svg>
<div class="abs" style="left:801px;top:191px;width:277px;height:306px;background:#fff"></div>
<div class="abs" style="left:801px;top:191px;width:12px;height:306px;background:#e9ecf6"></div>
<div class="abs" style="left:942px;top:191px;width:1px;height:306px;background:#e4e7f6"></div>
<div class="pr" style="top:206.6px"></div>
<div class="pn" style="top:193.8px">MainMenuStrip</div>
<div class="pv" style="top:193.8px">(none)</div>
<div class="pr" style="top:221.8px"></div>
<div class="pn" style="top:209.0px">MaximizeBox</div>
<div class="pv" style="top:209.0px">True</div>
<div class="pr" style="top:237.0px"></div>
<div class="pn" style="top:224.2px">MaximumSize</div>
<div class="pv" style="top:224.2px">0; 0</div>
<div class="px" style="top:226.9px"></div>
<div class="pr" style="top:252.2px"></div>
<div class="pn" style="top:239.4px">MinimizeBox</div>
<div class="pv" style="top:239.4px">True</div>
<div class="pr" style="top:267.5px"></div>
<div class="pn" style="top:254.6px">MinimumSize</div>
<div class="pv" style="top:254.6px">0; 0</div>
<div class="px" style="top:257.3px"></div>
<div class="pr" style="top:282.7px"></div>
<div class="pn" style="top:269.9px">Opacity</div>
<div class="pv" style="top:269.9px">100%</div>
<div class="pr" style="top:297.9px"></div>
<div class="pn" style="top:285.1px">Padding</div>
<div class="pv" style="top:285.1px">0; 0; 0; 0</div>
<div class="px" style="top:287.8px"></div>
<div class="pr" style="top:313.1px"></div>
<div class="pn" style="top:300.3px">RightToLeft</div>
<div class="pv" style="top:300.3px">No</div>
<div class="pr" style="top:328.3px"></div>
<div class="pn" style="top:315.5px">RightToLeftLayout</div>
<div class="pv" style="top:315.5px">False</div>
<div class="pr" style="top:343.5px"></div>
<div class="pn" style="top:330.7px">ShowIcon</div>
<div class="pv" style="top:330.7px">True</div>
<div class="pr" style="top:358.7px"></div>
<div class="pn" style="top:345.9px">ShowInTaskbar</div>
<div class="pv" style="top:345.9px">True</div>
<div class="pr" style="top:373.9px"></div>
<div class="pn" style="top:361.1px">Size</div>
<div class="pv" style="top:361.1px">300; 300</div>
<div class="px" style="top:363.8px"></div>
<div class="pr" style="top:389.1px"></div>
<div class="pn" style="top:376.3px">SizeGripStyle</div>
<div class="pv" style="top:376.3px">Auto</div>
<div class="pr" style="top:404.3px"></div>
<div class="pn" style="top:391.5px">StartPosition</div>
<div class="pv" style="top:391.5px">WindowsDefaultLocation</div>
<div class="pr" style="top:419.6px"></div>
<div class="pn" style="top:406.7px">Tag</div>
<div class="pr" style="top:434.8px"></div>
<div class="abs" style="left:813px;top:420.9px;width:129px;height:15px;background:#0a74d8"></div>
<div class="pn" style="top:421.9px;color:#fff">Text</div>
<div class="pv" style="top:421.9px;font-weight:bold;letter-spacing:-0.2px">Form1</div>
<div class="pr" style="top:450.0px"></div>
<div class="pn" style="top:437.2px">TopMost</div>
<div class="pv" style="top:437.2px">False</div>
<div class="pr" style="top:465.2px"></div>
<div class="pn" style="top:452.4px">TransparencyKey</div>
<div class="abs" style="left:944px;top:453.1px;width:15px;height:11px;box-sizing:border-box;border:1px solid #222;background:#fff"></div>
<div class="pr" style="top:480.4px"></div>
<div class="pn" style="top:467.6px">UseWaitCursor</div>
<div class="pv" style="top:467.6px">False</div>
<div class="pr" style="top:495.6px"></div>
<div class="pn" style="top:482.8px">WindowState</div>
<div class="pv" style="top:482.8px">Normal</div>
<div class="abs" style="left:1078px;top:191px;width:12px;height:306px;background:#f0f0f0"></div>
<div class="abs" style="left:1078px;top:387px;width:12px;height:96px;background:#cdcdcd"></div>
<svg style="left:1080px;top:197.500px" width="7.500" height="5" viewBox="0 0 9 6"><path d="M1 5l3.500-3.500 3.500 3.500" fill="none" stroke="#3a3a3a" stroke-width="1.700"/></svg>
<svg style="left:1080px;top:489px" width="7.500" height="5" viewBox="0 0 9 6"><path d="M1 1l3.500 3.500 3.500-3.500" fill="none" stroke="#3a3a3a" stroke-width="1.700"/></svg>
<div class="abs" style="left:801px;top:497px;width:289px;height:4px;background:#f0f0f0;border-top:1px solid #d9d9d9;border-bottom:1px solid #a0a0a0;box-sizing:border-box"></div>
<div class="abs" style="left:801px;top:501px;width:289px;height:48px;background:#f0f0f0"></div>
<div class="t" id="pdesc1" style="left:806px;top:504px;font-weight:bold;letter-spacing:-0.2px">Text</div>
<div class="t" id="pdesc2" style="left:806px;top:518px">The text associated with the control.</div>
<div class="abs" style="left:801px;top:548px;width:290px;height:1px;background:#9a9a9a"></div>
<svg style="left:0;top:0" width="1093" height="615" viewBox="0 0 1093 615" fill="none" stroke="#f47a1f" stroke-width="2.200" stroke-linecap="round" stroke-linejoin="round"><path d="M846.9 394.2C851.6 394.1 867.0 393.8 875.4 393.6C883.8 393.4 891.2 392.6 897.4 393.2C903.6 393.8 906.5 395.6 912.7 397.0C918.9 398.4 927.4 399.9 934.7 401.5C942.0 403.1 949.3 404.9 956.6 406.5C963.9 408.1 973.1 410.2 978.6 411.4C984.1 412.6 987.8 413.1 989.6 413.5"/><path d="M778.8 427.8C779.2 425.1 780.3 420.9 783.2 418.0C786.1 415.1 791.3 412.2 796.4 410.3C801.5 408.4 807.4 407.4 814.0 406.5C820.6 405.6 824.9 405.5 835.9 405.2C846.9 404.9 865.2 404.9 879.8 404.8C894.4 404.7 912.7 404.2 923.7 404.3C934.7 404.4 938.4 404.6 945.7 405.2C953.0 405.8 961.0 406.8 967.6 408.0C974.2 409.2 980.4 410.4 985.2 412.4C990.0 414.4 993.6 417.2 996.2 420.0C998.8 422.8 1000.6 426.1 1000.6 429.0C1000.6 431.9 999.9 435.4 996.2 437.7C992.5 439.9 985.2 441.5 978.6 442.5C972.0 443.5 969.4 443.6 956.6 443.8C943.8 444.0 918.3 443.9 901.8 443.8C885.3 443.7 872.4 443.6 857.8 443.2C843.1 442.8 824.9 442.3 813.9 441.6C802.9 440.9 797.5 440.0 792.0 438.8C786.5 437.6 783.2 436.2 781.0 434.4C778.8 432.6 778.4 430.5 778.8 427.8Z"/></svg>

<!-- ===== status bar ===== -->
<div class="abs" style="left:0;top:555px;width:1093px;height:19px;background:linear-gradient(#f6f3f2 0%,#f0f0f0 25%,#f0f0f0 100%)"></div>

<div class="t" id="ready" style="left:8px;top:559px;letter-spacing:-0.450px">Ready</div>
<!-- ===== taskbar ===== -->
<div class="abs" style="left:0;top:573px;width:1093px;height:42px;background:#070c1d"></div>
<div class="abs" style="left:0;top:573px;width:1093px;height:42px;background:linear-gradient(115deg,rgba(40,50,80,0) 0%,rgba(40,50,80,0) 18%,rgba(45,58,90,0.350) 24%,rgba(40,50,80,0) 31%,rgba(40,50,80,0) 78%,rgba(50,62,80,0.300) 84%,rgba(40,50,80,0) 90%)"></div>
<!-- start -->
<svg style="left:13px;top:599px" width="13" height="13" viewBox="0 0 13 13"><path d="M0 1.800l5.300-0.800v5.200h-5.300zM6 0.900l7-1v6.300h-7zM0 6.900h5.300v5.200l-5.300-0.800zM6 6.900h7v6.200l-7-1z" fill="#fff"/></svg>
<!-- cortana -->
<svg style="left:51px;top:598.700px" width="13" height="13" viewBox="0 0 13 13"><circle cx="6.500" cy="6.500" r="5.300" fill="none" stroke="#fff" stroke-width="1.900"/></svg>
<!-- task view -->
<svg style="left:88px;top:600px" width="16" height="11" viewBox="0 0 16 11" fill="none" stroke="#fff" stroke-width="1.400"><rect x="3.600" y="0.600" width="8.800" height="9.800"/><path d="M1.600 1.500c-1 2.500-1 5.500 0 8M14.400 1.500c1 2.500 1 5.500 0 8"/></svg>
<!-- edge -->
<svg style="left:129px;top:581px" width="17" height="16" viewBox="0 0 17 16"><path d="M0.500 7.500C1 3 4.500 0.300 8.800 0.300c4.700 0 7.700 3.200 7.700 7.700v1.500H5.800c0.200 2.300 2 3.500 4.500 3.500 1.900 0 3.700-0.500 5.200-1.400v3.200c-1.600 0.800-3.500 1.200-5.700 1.200-4.600 0-7.600-2.700-7.600-6.800 0-2 0.800-3.600 2-4.800C2.500 5 1.200 6 0.500 7.500zM5.900 6.500h6c0-1.900-1.200-3.100-2.900-3.100-1.700 0-2.900 1.300-3.100 3.100z" fill="#1a84e0"/></svg>
<!-- explorer -->
<svg style="left:167px;top:581px" width="18" height="16" viewBox="0 0 18 16"><path d="M0.500 1.500h6l1.500 1.500h9.500v11h-17z" fill="#f6d874"/><rect x="0.500" y="4.500" width="17" height="9.500" fill="#fbe38f"/><path d="M3 14V8.500h12V14h-3v-3H6v3z" fill="#3c9be6"/><rect x="1" y="2.200" width="4" height="1" fill="#d9b23c"/></svg>
<div class="ul" style="left:160px;width:32px"></div>
<!-- store -->
<svg style="left:206px;top:579px" width="18" height="20" viewBox="0 0 18 20"><path d="M5.500 5.500C5.500 2.500 7 1 9 1s3.500 1.500 3.500 4.500" fill="none" stroke="#fff" stroke-width="1.100"/><path d="M0.800 5.500l16.500-1v12.500l-9 2-7.500-2z" fill="#fff"/><path d="M4.500 8.200l3.600-0.400v3.300h-3.600zM9 7.700l4-0.500v3.900h-4zM4.500 12h3.600v3.400l-3.600-0.500zM9 12h4v4l-4-0.600z" fill="#0b1020"/></svg>
<!-- word -->
<svg style="left:245px;top:580px" width="18" height="17" viewBox="0 0 18 17"><defs><linearGradient id="wdg" x1="0" y1="0" x2="0.600" y2="1"><stop offset="0" stop-color="#8fb0ec"/><stop offset="0.550" stop-color="#dfe9fb"/><stop offset="1" stop-color="#ffffff"/></linearGradient></defs><rect x="0" y="0" width="17" height="17" rx="1" fill="url(#wdg)"/><rect x="15" y="0.500" width="2.300" height="16" fill="#3a66c8"/><path d="M12.500 10.500l5 0.800-1.300 5.200-4.200-1z" fill="#f7f9fe"/><text x="7.500" y="12" font-size="12.500" font-weight="bold" text-anchor="middle" font-family="Liberation Sans, sans-serif" fill="#1a4fb5">W</text></svg>
<!-- chrome -->
<svg style="left:284px;top:580px" width="19" height="19" viewBox="0 0 19 19"><circle cx="9.500" cy="9.500" r="9" fill="#e8443a"/><path d="M9.500 9.500L1.800 5 A9 9 0 0 0 7.500 18.300z" fill="#33a852"/><path d="M9.500 9.500L7.500 18.300A9 9 0 0 0 17.800 6L9.500 6z" fill="#fbc116"/><path d="M1.800 5A9 9 0 0 1 17.800 6H9.500z" fill="#e8443a"/><circle cx="9.500" cy="9.500" r="4.200" fill="#f4f4f4"/><circle cx="9.500" cy="9.500" r="3.300" fill="#4a8af4"/></svg>
<div class="ul" style="left:277px;width:33px"></div>
<!-- paint -->
<svg style="left:322px;top:578px" width="22" height="22" viewBox="0 0 22 22"><path d="M1 12.500C1 8 5 5 10 5c5.500 0 9.500 3 9.500 7 0 2.500-2 3.500-4 3.200-1.800-0.300-3 0.300-3 1.800 0 1.200-1.200 2-3.200 2C4.500 19 1 16.500 1 12.500z" fill="#c7dbee" stroke="#7d9cbb" stroke-width="0.800"/><circle cx="5" cy="12" r="1.500" fill="#d8432f"/><circle cx="7" cy="8.500" r="1.500" fill="#3f9a3f"/><circle cx="11" cy="7.500" r="1.500" fill="#e8b820"/><circle cx="15" cy="9" r="1.400" fill="#3a6fd0"/><path d="M9.500 17.500L16 4" stroke="#e08a2a" stroke-width="1.800"/><path d="M16 4l1.500-3.200 0.700 3.700z" fill="#f2d9a0" stroke="#b98a4a" stroke-width="0.500"/></svg>
<div class="ul" style="left:317px;width:32px"></div>
<!-- calculator -->
<svg style="left:365px;top:580px" width="15" height="19" viewBox="0 0 15 19"><rect x="0" y="0" width="15" height="19" rx="1" fill="#fff"/><rect x="2" y="1.800" width="11" height="3" fill="#0b1020"/><g fill="#0b1020"><rect x="2.200" y="7" width="2.600" height="2.200"/><rect x="6.200" y="7" width="2.600" height="2.200"/><rect x="10.200" y="7" width="2.600" height="2.200"/><rect x="2.200" y="10.800" width="2.600" height="2.200"/><rect x="6.200" y="10.800" width="2.600" height="2.200"/><rect x="10.200" y="10.800" width="2.600" height="2.200"/><rect x="2.200" y="14.600" width="2.600" height="2.200"/><rect x="6.200" y="14.600" width="2.600" height="2.200"/><rect x="10.200" y="14.600" width="2.600" height="2.200"/></g></svg>
<!-- acrobat -->
<svg style="left:403px;top:580px" width="17" height="16" viewBox="0 0 17 16"><defs><linearGradient id="acg" x1="0" y1="0" x2="0" y2="1"><stop offset="0" stop-color="#d81f1f"/><stop offset="1" stop-color="#8f0a0a"/></linearGradient></defs><rect x="0" y="0" width="17" height="16" rx="1" fill="url(#acg)"/><path d="M4 13c1.500-1.500 3.500-4.500 4-8 0.200-1.500-0.800-2.300-1-1 -0.300 2 2 5.500 5.500 6.500 1.500 0.300 1.500-0.800 0-0.800-2.500 0-6 1.200-8.500 3.300z" fill="none" stroke="#fff" stroke-width="0.900"/></svg>
<!-- powerpoint -->
<svg style="left:441px;top:580px" width="18" height="17" viewBox="0 0 18 17"><rect x="0.500" y="0.500" width="15" height="16" rx="1.500" fill="#e2582a"/><rect x="9.500" y="1.500" width="7.500" height="12" fill="#f6e3da"/><rect x="0.500" y="11" width="15" height="5.500" fill="#f3b79c"/><circle cx="13" cy="10" r="2.600" fill="#f7cdb9" stroke="#d8431a" stroke-width="0.800"/><text x="5.200" y="11.500" font-size="12" font-weight="bold" text-anchor="middle" font-family="Liberation Sans, sans-serif" fill="#fff">P</text></svg>
<!-- VC++ (active) -->
<div class="abs" style="left:470px;top:573px;width:39px;height:32px;background:#343a4c"></div>
<div class="ul" style="left:470px;width:39px;background:#8fc0f0"></div>
<svg style="left:481px;top:582px" width="18" height="15" viewBox="0 0 18 15"><rect x="0.500" y="0.500" width="14.500" height="11.500" fill="#f3d36a" stroke="#b98d1c"/><rect x="2" y="2" width="11.500" height="8.500" fill="#fbefb5"/><path d="M4 6h3M5.500 4.500v3M8 7.500h3M9.500 6v3" stroke="#8a6a10" stroke-width="1"/><path d="M6 13h9.500M13.500 11l3.500 2-3.500 2" stroke="#2f63c6" stroke-width="1.600" fill="none"/></svg>
<!-- tray -->
<svg style="left:901px;top:602px" width="10" height="6" viewBox="0 0 10 6"><path d="M0.800 5.300l4.200-4.200 4.200 4.200" fill="none" stroke="#fff" stroke-width="1.100"/></svg>
<svg style="left:920px;top:584px" width="12" height="11" viewBox="0 0 12 11" fill="none" stroke="#d9dde6"><path d="M1 10.500A9.500 9.500 0 0 1 10.500 1" stroke-width="0.900"/><path d="M3.500 10.500A7 7 0 0 1 10.500 3.500" stroke-width="0.900"/><path d="M6 10.500A4.500 4.500 0 0 1 10.500 6" stroke-width="0.900"/><circle cx="9.700" cy="9.700" r="1.100" fill="#fff" stroke="none"/></svg>
<svg style="left:937px;top:584px" width="14" height="11" viewBox="0 0 14 11" fill="none" stroke="#fff"><path d="M0.600 3.800h2.200l2.800-2.800v9l-2.800-2.800H0.600z" stroke-width="0.900"/><path d="M7.300 3.500c0.900 1.200 0.900 2.800 0 4" stroke-width="0.900"/><path d="M9.200 2c1.600 2.100 1.600 4.900 0 7" stroke-width="0.900"/><path d="M11.100 0.700c2.100 2.900 2.100 6.700 0 9.600" stroke-width="0.800" stroke="#aab"/></svg>
<div class="tk" id="tkpor" style="left:959px;top:600px;letter-spacing:-0.500px">POR</div>
<div class="tk" id="tktime" style="left:1006px;top:582px;letter-spacing:-0.300px">17:37</div>
<div class="tk" id="tkday" style="left:992px;top:600px">quarta-feira</div>
<svg style="left:1060px;top:599px" width="14" height="13" viewBox="0 0 14 13"><path d="M0.600 0.600h12.800v8.800h-4.400l-2 2.600-2-2.600h-4.400z" fill="none" stroke="#fff" stroke-width="1.100"/></svg>
<div class="abs" style="left:1089px;top:573px;width:1px;height:42px;background:#3a4052"></div>

</body>
</html>
